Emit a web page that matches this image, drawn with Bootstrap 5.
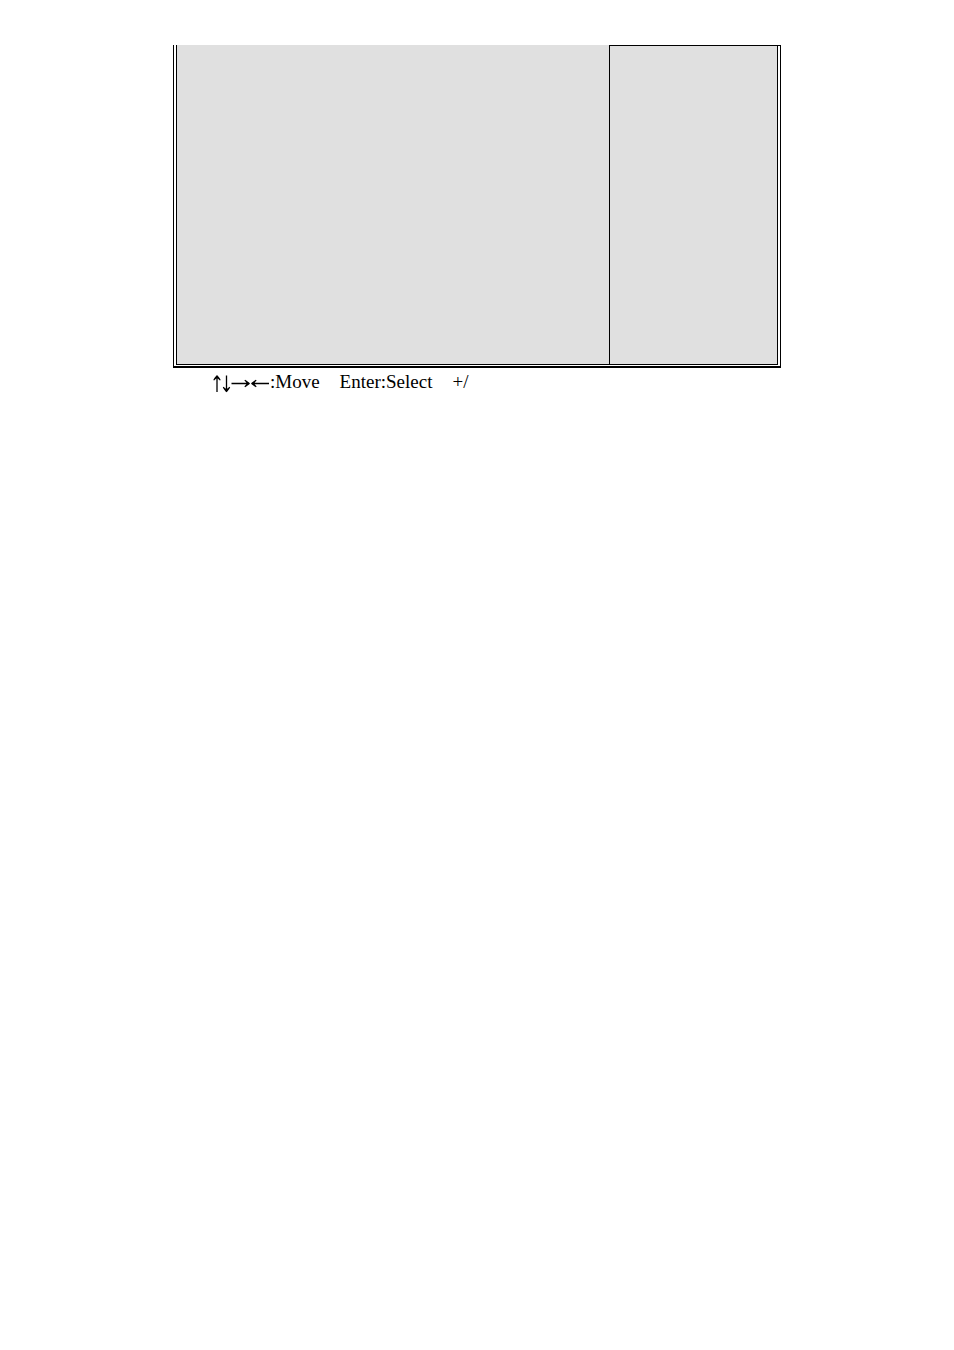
<!DOCTYPE html>
<html lang="en">
<head>
<meta charset="utf-8">
<meta name="viewport" content="width=device-width, initial-scale=1">
<title>Setup screen</title>
<link href="https://cdn.jsdelivr.net/npm/bootstrap@5.3.0/dist/css/bootstrap.min.css" rel="stylesheet">
<style>
  body { background: #fff; color: #000; font-family: "Liberation Serif", "Times New Roman", serif; font-size: 19px; line-height: 28px; }
  .setup-page { max-width: 608px; padding-top: 45px; }
  /* double frame: thin inner rule, heavier outer rule at the bottom */
  .setup-frame {
    border: solid #000; border-width: 0 1px 2px; padding: 0 2px 1px;
    background: linear-gradient(#000, #000) right top / 171px 1px no-repeat;
  }
  .setup-panels { border: solid #000; border-width: 0 1px 1px; min-height: 320px; }
  .setup-options { background: #e0e0e0; }
  .setup-help { background: #e0e0e0; width: 168px; flex: none; border: solid #000; border-width: 1px 0 0 1px; }
  .setup-keys { padding-left: 39px; column-gap: 20px; }
  .arrow-icons { width: 58px; height: 28px; flex: none; }
</style>
</head>
<body>
<main class="setup-page container-fluid px-0 mx-auto">
  <div class="setup-frame">
    <div class="setup-panels d-flex">
      <section class="setup-options flex-grow-1" aria-label="Options"></section>
      <aside class="setup-help" aria-label="Item help"></aside>
    </div>
  </div>
  <div class="setup-keys d-flex flex-wrap">
    <div class="d-flex">
      <svg class="arrow-icons" viewBox="0 0 58 28" role="img" aria-label="Up, down, right and left arrow keys">
        <defs><path id="head" d="M0 0C-1.2 1.1-2.4 2.7-3.7 4.9L-2.9 5.6C-2 4.6-1.1 3.900-.5 3.600H.5C1.1 3.900 2 4.600 2.900 5.600L3.700 4.900C2.400 2.700 1.200 1.100 0 0Z"/></defs>
        <path d="M5 9V24M14.500 7.500V22M19.500 15.500H36M41 15.500H57" fill="none" stroke="#000" stroke-width="1.300"/>
        <use href="#head" transform="translate(5 7)"/>
        <use href="#head" transform="translate(14.500 24.300) rotate(180)"/>
        <use href="#head" transform="translate(38 15.500) rotate(90)"/>
        <use href="#head" transform="translate(39 15.500) rotate(-90)"/>
      </svg>
      <span>:Move</span>
    </div>
    <div>Enter:Select</div>
    <div>+/</div>
  </div>
</main>
<script src="https://cdn.jsdelivr.net/npm/bootstrap@5.3.0/dist/js/bootstrap.bundle.min.js"></script>
</body>
</html>
